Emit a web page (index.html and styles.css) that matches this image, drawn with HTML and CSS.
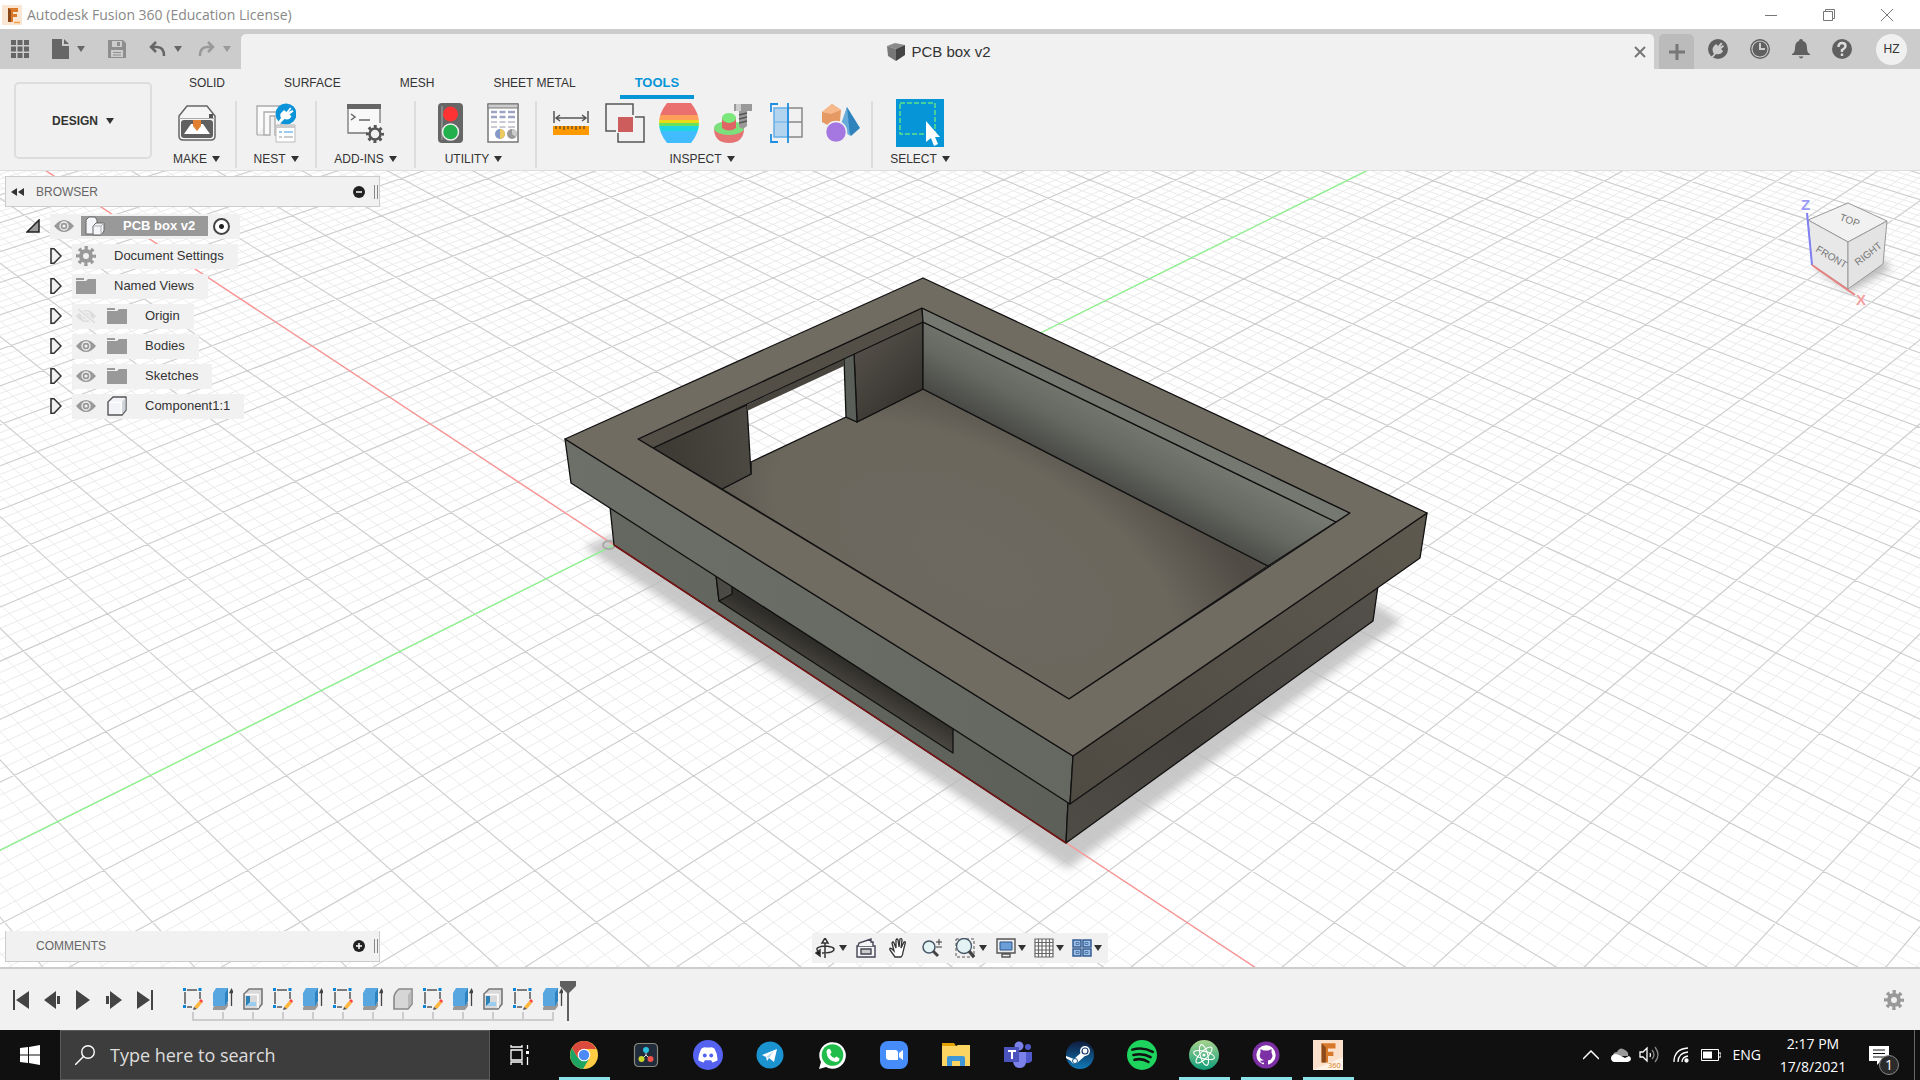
FILE: index.html
```html
<!DOCTYPE html>
<html lang="en">
<head>
<meta charset="utf-8">
<title>Autodesk Fusion 360 (Education License)</title>
<link rel="stylesheet" href="styles.css">
</head>
<body>
<svg class="sprite" aria-hidden="true">
  <symbol id="gear" viewBox="0 0 20 20"><circle cx="10" cy="10" r="5" fill="none" stroke="currentColor" stroke-width="4"/><circle cx="10" cy="10" r="8" fill="none" stroke="currentColor" stroke-width="4" stroke-dasharray="3.14 3.14" stroke-dashoffset="1.57"/></symbol>
  <symbol id="eye" viewBox="0 0 20 14"><path d="M0 7Q5 1 10 1T20 7Q15 13 10 13T0 7Z" fill="#999"/><circle cx="10" cy="7" r="4" fill="#999" stroke="#f1f1f1" stroke-width="1.3"/><circle cx="10" cy="7" r="1.6" fill="#f1f1f1"/></symbol>
  <symbol id="eye-off" viewBox="0 0 20 14"><path d="M0 7Q5 1 10 1T20 7Q15 13 10 13T0 7Z" fill="#dcdcdc"/><circle cx="10" cy="7" r="4" fill="#dcdcdc" stroke="#f1f1f1" stroke-width="1.3"/><path d="M1 0l18 14" stroke="#f1f1f1" stroke-width="4"/><path d="M2 0l17 14" stroke="#dcdcdc" stroke-width="1.5"/></symbol>
  <symbol id="folder" viewBox="0 0 20 16"><path d="M0 0h8v2H0zM0 3h10l2-2h8v15H0Z" fill="#999"/></symbol>
  <symbol id="arrow" viewBox="0 0 12 16"><path d="M1 .8h3L11 8l-7 7.200H1Z" fill="#f1f1f1" stroke="#333" stroke-width="1.6"/></symbol>
  <symbol id="cube" viewBox="0 0 20 20"><path d="M1 6l5-5h13v13l-4 5H1Z" fill="#f1f3f6" stroke="#555" stroke-width="1.4" stroke-linejoin="round"/><path d="M2 6.500h12.500V18" fill="none" stroke="#fff" stroke-width="1.5"/><path d="M15 6l3.500-4v12L15 18Z" fill="#cfd3da"/></symbol>
  <symbol id="sketch" viewBox="0 0 20 22"><path d="M4 2h10M2 4v12M17 4v7M4 19h5" stroke="#555" stroke-width="1.5" fill="none"/><path d="M0 0h3v3H0zM15.500 0h3v3h-3zM0 17h3v3H0z" fill="#0a86d8"/><path d="M11 19l5-6 3 2-5 6z" fill="#ffb83d"/><path d="M16 13l2-2 2 2-1 2z" fill="#f44"/><path d="M11 19l3 2-4 1z" fill="#555"/></symbol>
  <symbol id="extrude" viewBox="0 0 20 22"><path d="M0 20l1-2h10l4-4v4l-3 4H0Z" fill="#999"/><path d="M0 5l3-5h12v13l-3 5H0Z" fill="#57a6e0"/><path d="M12 5l3-5v13l-3 5Z" fill="#2d83bf"/><path d="M18.500 3v15M17 4.500l1.500-3 1.500 3z" stroke="#444" stroke-width="1.300" fill="#444"/></symbol>
  <symbol id="shell" viewBox="0 0 20 22"><path d="M1 6l5-5h13v15l-4 5H1Z" fill="#d9d9d9" stroke="#777" stroke-width="1.6"/><path d="M2 6.500h13V20" fill="none" stroke="#fff" stroke-width="1.5"/><path d="M3 8h4v6h6v4H3Z" fill="#2f80b4"/><path d="M3 18l4-4h6v4z" fill="#9bcdf1"/></symbol>
  <symbol id="fillet" viewBox="0 0 20 22"><path d="M1 10Q1 5 6 1h13v15l-4 5H1Z" fill="#d6d6d6" stroke="#888" stroke-width="1.6"/><path d="M15 7v13l3.500-4V2Z" fill="#b9b9b9"/></symbol>
</svg>

<header class="titlebar">
  <svg class="app-mark" viewBox="0 0 20 20"><rect width="20" height="20" fill="#fbe6d3"/><path d="M6 3h10v4h-5v2h4v3h-4v5H6Z" fill="#d8782a"/><path d="M6 3l3 2v12H6Z" fill="#8c4a1c"/><path d="M12 17.500h6" stroke="#f0a040" stroke-width="1.500"/></svg>
  <h1 class="window-title">Autodesk Fusion 360 (Education License)</h1>
  <button class="win-btn" aria-label="Minimize"><svg width="12" height="12"><path d="M0 6.500h12" stroke="#777"/></svg></button>
  <button class="win-btn" aria-label="Restore"><svg width="12" height="12" fill="none" stroke="#777"><path d="M.5 2.500h9v9h-9zM2.500 2V.5h9v9H10"/></svg></button>
  <button class="win-btn" aria-label="Close"><svg width="12" height="12"><path d="M0 0l12 12M12 0L0 12" stroke="#777"/></svg></button>
</header>

<div class="tabbar">
  <div class="quick">
    <button aria-label="Show data panel"><svg width="18" height="18" fill="#666"><path d="M0 0h5v5H0zM6.500 0h5v5h-5zM13 0h5v5h-5zM0 6.500h5v5H0zM6.500 6.500h5v5h-5zM13 6.500h5v5h-5zM0 13h5v5H0zM6.500 13h5v5h-5zM13 13h5v5h-5z"/></svg></button>
    <button aria-label="File"><svg width="17" height="20" fill="#666"><path d="M0 0h10v7h7v13H0z"/><path d="M12 0l5 5h-5z"/></svg><i class="caret"></i></button>
    <button class="dim" aria-label="Save"><svg width="18" height="18"><path d="M0 0h15l3 3v15H0z" fill="#8e8e8e"/><path d="M4 1h10v6H4zM3 10h12v7H3z" fill="#ccc"/><path d="M9 2h3v4H9zM5 12h8v1H5zM5 14.500h8v1H5z" fill="#8e8e8e"/></svg></button>
    <button aria-label="Undo"><svg width="17" height="16" fill="none" stroke="#666" stroke-width="2.500"><path d="M7 1L2 6l5 5M2 6h6q7 0 7 9"/></svg><i class="caret"></i></button>
    <button class="dim" aria-label="Redo"><svg width="17" height="16" fill="none" stroke="#999" stroke-width="2.500"><path d="M10 1l5 5-5 5M15 6H9q-7 0-7 9"/></svg><i class="caret"></i></button>
  </div>
  <div class="doc-tab">
    <svg width="20" height="18" viewBox="0 0 20 18"><path d="M1 3l8-3 10 2-9 4Z" fill="#8a8a8a"/><path d="M1 3l9 3v12L2 13Z" fill="#777"/><path d="M10 6l9-4v10l-9 6Z" fill="#444"/></svg>
    <span class="doc-name">PCB box v2</span>
    <button class="doc-close" aria-label="Close document"><svg width="12" height="12"><path d="M1 1l10 10M11 1L1 11" stroke="#777" stroke-width="2"/></svg></button>
  </div>
  <div class="account">
    <button class="new-tab" aria-label="New design"><svg width="16" height="16"><path d="M8 0v16M0 8h16" stroke="#777" stroke-width="3"/></svg></button>
    <button aria-label="Extensions"><svg width="20" height="20"><circle cx="10" cy="10" r="10" fill="#606060"/><path d="M3 18l3-3Q3 10 6 7l2-2 2 2 3-3.500 1.500 1L12 8l3-2 1 1.500L13 10l2 2q-2 4-7 3l-3 3.500Z" fill="#ccc"/></svg></button>
    <button aria-label="Job status"><svg width="20" height="20"><circle cx="10" cy="10" r="9.300" fill="#ccc" stroke="#606060" stroke-width="1.400"/><circle cx="10" cy="10" r="7.500" fill="#606060"/><path d="M10 4v6h5" fill="none" stroke="#ccc" stroke-width="2"/></svg></button>
    <button aria-label="Notifications"><svg width="18" height="20" fill="#606060"><path d="M9 0q2 0 2 2 4 1 4 7 0 5 3 6v1H0v-1q3-1 3-6 0-6 4-7 0-2 2-2ZM6.500 17.500h5q-2 4-5 0Z"/></svg></button>
    <button aria-label="Help"><svg width="20" height="20"><circle cx="10" cy="10" r="10" fill="#606060"/><path d="M6.500 8q0-4 3.500-4t3.500 3q0 2-3.500 4v2M10 14.500v2.500" fill="none" stroke="#ddd" stroke-width="2.400"/></svg></button>
    <button class="avatar">HZ</button>
  </div>
</div>

<div class="ribbon">
  <button class="workspace">DESIGN <i class="caret"></i></button>
  <div class="ribbon-main">
    <nav class="tabs">
      <a href="#">SOLID</a><a href="#">SURFACE</a><a href="#">MESH</a><a href="#">SHEET METAL</a><a href="#" class="active">TOOLS</a>
    </nav>
    <div class="groups">
      <section class="group make">
        <div class="tools"><button aria-label="3D Print"><svg width="38" height="36" viewBox="0 0 38 36"><path d="M1 11L9 1h20l8 10v20q0 4-4 4H5q-4 0-4-4Z" fill="#f5f5f5" stroke="#666" stroke-width="1.500"/><path d="M1 13.500h36" stroke="#aaa"/><path d="M3 18q0-3 3-3h26q3 0 3 3v12q0 3-3 3H6q-3 0-3-3Z" fill="#606060"/><path d="M6 29l7-10h3l3 6 3-6h3l7 10Z" fill="#fff"/><path d="M15 15h8v6l-4 5-4-5Z" fill="#e08030"/><path d="M31 9h4v4h-4z" fill="#555"/></svg></button></div>
        <button class="group-label">MAKE <i class="caret"></i></button>
      </section>
      <section class="group nest">
        <div class="tools"><button aria-label="Nest"><svg width="40" height="40" viewBox="0 0 40 40"><path d="M1 32V3h24v29h-6V13h-5v19H8V9h12" fill="#fafafa" stroke="#aaa" stroke-width="1.300"/><path d="M1 32h7" stroke="#aaa"/><circle cx="30" cy="11" r="10.500" fill="#0a93d8"/><path d="M22 19l3-4q-2-4 1-6l2-2 2.500 2L34 4.500l1.500 1L32.500 9l4-2 1 1.500-4 3 2 2q-2 4-7 2.500l-4 4Z" fill="#fff"/><path d="M20 22h19v17H20z" fill="#fff" stroke="#bbb"/><path d="M20 22h19v3H20z" fill="#ccc"/><path d="M23 29h3M28 29h9" stroke="#7bbcec" stroke-width="1.500"/><path d="M23 34h3M28 34h9" stroke="#bbb" stroke-width="1.500"/></svg></button></div>
        <button class="group-label">NEST <i class="caret"></i></button>
      </section>
      <section class="group addins">
        <div class="tools"><button aria-label="Scripts and Add-Ins"><svg width="38" height="40" viewBox="0 0 38 40"><path d="M1 2h32v28H1Z" fill="#f8f8f8"/><path d="M33 20V2H1v28h18" fill="none" stroke="#777" stroke-width="1.300"/><path d="M0 1h34v5H0z" fill="#666"/><path d="M4 11l4 3-4 3M12 17h11" fill="none" stroke="#666" stroke-width="1.500"/><circle cx="28" cy="31" r="5.500" fill="#f1f1f1" stroke="#555" stroke-width="2.500"/><circle cx="28" cy="31" r="7.500" fill="none" stroke="#555" stroke-width="3" stroke-dasharray="2.950 2.950" stroke-dashoffset="1.500"/></svg></button></div>
        <button class="group-label">ADD-INS <i class="caret"></i></button>
      </section>
      <section class="group utility">
        <div class="tools"><button class="slim" aria-label="Compute all"><svg width="25" height="40" viewBox="0 0 25 40"><rect width="25" height="40" rx="4" fill="#666"/><path d="M3 3h2v34H3z" fill="#888"/><circle cx="12.500" cy="11" r="7.500" fill="#f33"/><circle cx="12.500" cy="29" r="8" fill="#22b04c" stroke="#eee" stroke-width="1.500"/></svg></button><button aria-label="Bill of materials"><svg width="32" height="40" viewBox="0 0 32 40"><path d="M1 1h30v38H1z" fill="#fff" stroke="#777" stroke-width="1.500"/><path d="M1 1h30v4H1z" fill="#ccc" stroke="#777"/><path d="M4 9h6M12.500 9h6M21 9h7M4 14h6M12.500 14h6M21 14h7" stroke="#9da3c0" stroke-width="2.500"/><path d="M4 19h6M12.500 19h6M21 19h7M4 24h6M12.500 24h6M21 24h7" stroke="#c9c9d6" stroke-width="2"/><circle cx="13" cy="31" r="5" fill="#8499c8"/><path d="M13 31v-5a5 5 0 0 1 0 10z" fill="#eec95c"/><circle cx="25" cy="31" r="5" fill="#999"/><path d="M25 31v-5a5 5 0 0 1 4 8z" fill="#ccc"/></svg></button></div>
        <button class="group-label">UTILITY <i class="caret"></i></button>
      </section>
      <section class="group inspect">
        <div class="tools">
          <button aria-label="Measure"><svg width="36" height="24" viewBox="0 0 36 24"><path d="M1 0v12M35 0v12M3 7h30M7 4L3 7l4 3M29 4l4 3-4 3" fill="none" stroke="#555" stroke-width="1.500"/><path d="M0 15h36v9H0z" fill="#f90"/><path d="M3 15v3M7 15v3M11 15v4M15 15v3M19 15v3M23 15v4M27 15v3M31 15v3" stroke="#333"/></svg></button>
          <button aria-label="Interference"><svg width="40" height="40" viewBox="0 0 40 40" fill="none" stroke="#555" stroke-width="1.500"><path d="M11 28H1V1h27v11M30 14h9v25H13V30"/><path d="M13 14h15v15H13z" fill="#cd5c5c" stroke="none"/></svg></button>
          <button aria-label="Curvature comb"><svg width="40" height="40" viewBox="0 0 40 40"><clipPath id="barrel"><path d="M8 0h24q8 10 8 20t-8 20H8Q0 30 0 20T8 0Z"/></clipPath><g clip-path="url(#barrel)"><path d="M0 0h40v13H0z" fill="#ea7070"/><path d="M0 12h40v5H0z" fill="#ff9f5c"/><path d="M0 17h40v3H0z" fill="#e8dc18"/><path d="M0 20h40v3H0z" fill="#6be05a"/><path d="M0 23h40v5H0z" fill="#1cd6e0"/><path d="M0 28h40v12H0z" fill="#40bcff"/></g></svg></button>
          <button aria-label="Draft analysis"><svg width="38" height="40" viewBox="0 0 38 40"><path d="M0 25q0 15 15 15t15-15Z" fill="#e57373"/><ellipse cx="15" cy="25" rx="15" ry="7" fill="#7be07b"/><path d="M8 14h14v11q-7 5-14 0Z" fill="#e06464"/><ellipse cx="15" cy="15" rx="7" ry="5" fill="#7be87b"/><path d="M20 1h18v7H20zM25 8h8v15l-4 3-4-2Z" fill="#999"/><path d="M22 1h5v7h-5z" fill="#ccc"/><path d="M25 12l8-2M25 16l8-2M25 20l8-2" stroke="#555" stroke-width="1.500"/></svg></button>
          <button aria-label="Section analysis"><svg width="34" height="40" viewBox="0 0 34 40" fill="none"><path d="M4 5h14v29H4z" fill="#b2d4ef" stroke="#66afe6" stroke-width="1.500"/><path d="M18 5h14v29H18M18 19h14" stroke="#888" stroke-width="1.500"/><path d="M4 19h14" stroke="#66afe6"/><path d="M8 1H1v8M1 31v8h7M18 0v40" stroke="#1e8fe0" stroke-width="1.800"/></svg></button>
          <button aria-label="Component color cycling"><svg width="38" height="38" viewBox="0 0 38 38"><path d="M0 8l10-8 9 6-1 11-9 6-9-5Z" fill="#e59a64"/><path d="M0 8l10-8 9 6-10 4Z" fill="#f7b98c"/><path d="M25 3l13 21-9 8-9-12Z" fill="#2f83bd"/><path d="M25 3l3 29-10-9Z" fill="#66abd9"/><circle cx="14" cy="28" r="10.500" fill="#a478e0" stroke="#f1f1f1" stroke-width="1.500"/></svg></button>
        </div>
        <button class="group-label">INSPECT <i class="caret"></i></button>
      </section>
      <section class="group select">
        <div class="tools"><button class="select-tool" aria-label="Select"><svg width="48" height="48" viewBox="0 0 48 48"><path d="M4 4h35v31H4z" fill="none" stroke="#5fe08a" stroke-width="1.500" stroke-dasharray="5 2"/><path d="M30 22v21l5-4 3 8 4-2-3-7h5Z" fill="#fff"/></svg></button></div>
        <button class="group-label">SELECT <i class="caret"></i></button>
      </section>
    </div>
  </div>
</div>

<main class="viewport">
  <svg class="scene" viewBox="0 171 1920 796" preserveAspectRatio="xMidYMid slice">
    <defs>
      <filter id="soft" x="-10%" y="-10%" width="120%" height="120%"><feGaussianBlur stdDeviation="4"/></filter>
      <linearGradient id="frontFace" x1="0" y1="0" x2="1" y2="0"><stop offset="0" stop-color="#6d6f69"/><stop offset="1" stop-color="#656761"/></linearGradient>
      <linearGradient id="frontBase" x1="0" y1="0" x2="1" y2="0"><stop offset="0" stop-color="#656761"/><stop offset="1" stop-color="#5d5f59"/></linearGradient>
      <linearGradient id="sideFace" x1="0" y1="1" x2="1" y2="0"><stop offset="0" stop-color="#4f4b43"/><stop offset="1" stop-color="#5d594f"/></linearGradient>
      <linearGradient id="sideBase" x1="0" y1="1" x2="1" y2="0"><stop offset="0" stop-color="#4f4c46"/><stop offset=".4" stop-color="#46433e"/><stop offset="1" stop-color="#54504a"/></linearGradient>
      <radialGradient id="floor" gradientUnits="userSpaceOnUse" cx="0" cy="0" r="1" gradientTransform="translate(975 565) rotate(28) scale(340 170)"><stop offset="0" stop-color="#6e6960"/><stop offset=".65" stop-color="#6b675d"/><stop offset="1" stop-color="#504b44"/></radialGradient>
      <linearGradient id="longWall" gradientUnits="userSpaceOnUse" x1="1135" y1="415" x2="1095" y2="490"><stop offset="0" stop-color="#777a73"/><stop offset=".45" stop-color="#666862"/><stop offset="1" stop-color="#42433f"/></linearGradient>
      <linearGradient id="wallA" gradientUnits="userSpaceOnUse" x1="670" y1="450" x2="750" y2="440"><stop offset="0" stop-color="#3e3b35"/><stop offset="1" stop-color="#4c4842"/></linearGradient>
      <linearGradient id="wallB" gradientUnits="userSpaceOnUse" x1="860" y1="350" x2="915" y2="405"><stop offset="0" stop-color="#524e47"/><stop offset="1" stop-color="#35322e"/></linearGradient>
      <linearGradient id="slot" gradientUnits="userSpaceOnUse" x1="845" y1="660" x2="832" y2="682"><stop offset="0" stop-color="#2f2d29"/><stop offset="1" stop-color="#4b4842"/></linearGradient>
    </defs>
    <rect x="-400" y="-200" width="2800" height="1600" fill="#fff"/>
    <path id="grid-minor" class="grid-minor"/>
    <path id="grid-major" class="grid-major"/>
    <path class="shadow" d="M584 547L1068 869 1402 621 1376 604 614 535Z" filter="url(#soft)"/>
    <path id="axis-x" class="axis-x"/>
    <path id="axis-y" class="axis-y"/>
    <ellipse class="origin" cx="609" cy="545" rx="6" ry="4"/>
    <g class="body">
      <path fill="url(#floor)" d="M751 462L846 417 857 422 923 389 1268 566 1069 699 722 489 751 474Z"/>
      <path fill="url(#wallA)" d="M653 448L747 405 751 474 722 489Z"/>
      <path fill="url(#wallB)" d="M854 353L923 322V389L857 422Z"/>
      <path fill="#5a5f59" d="M844 358L854 353 857 422 846 417Z"/>
      <path fill="#48443e" class="no-edge" d="M747 405L844 358V366L747 411Z"/>
      <path fill="#534f47" d="M638 439L922 308 923 322 653 448Z"/>
      <path fill="url(#longWall)" d="M923 322L1336 522 1268 566 923 389Z"/>
      <path fill="#757871" d="M922 308L1350 513 1336 522 923 322Z"/>
      <path fill="url(#frontBase)" d="M610 507L614 545 1066 843 1068 802Z"/>
      <path fill="url(#sideBase)" d="M1068 802L1066 843 1373 621 1378 586Z"/>
      <path fill="url(#slot)" d="M716 575L719 601 953 753V728Z"/>
      <path fill="#4b4a44" d="M716 575L719 601 732 594V585Z"/>
      <path fill="url(#frontFace)" d="M565 439L571 483 1070 804 1073 756Z"/>
      <path fill="url(#sideFace)" d="M1073 756L1070 804 1420 558 1427 513Z"/>
      <path fill="#716c62" fill-rule="evenodd" d="M565 439L923 278 1427 513 1073 756ZM638 439L1069 699 1350 513 922 308Z"/>
    </g>
    <path class="axis-edge" d="M614 545L1066 843"/>
  </svg>

  <div class="overlay">
    <div class="left-dock">
      <section class="panel">
        <svg width="13" height="8"><path d="M6 0v8L0 4ZM13 0v8L7 4Z" fill="#333"/></svg>
        <h2 class="panel-title">BROWSER</h2>
        <button aria-label="Collapse browser"><svg width="12" height="12"><circle cx="6" cy="6" r="6" fill="#222"/><path d="M3 6h6" stroke="#fff" stroke-width="1.500"/></svg></button>
        <i class="grip"></i>
      </section>
      <ul class="tree">
        <li class="root"><svg width="14" height="14"><path d="M1 13L13 1v12Z" fill="#999" stroke="#222" stroke-width="1.500"/></svg><div class="node"><svg width="20" height="14"><use href="#eye"/></svg><span class="picked"><svg width="20" height="20" viewBox="0 0 20 20" fill="#f3f5f8" stroke="#666"><path d="M1 4l3-3h6l2 3v14H1Z"/><path d="M8 10l3-3h8v8l-3 4H8Z"/><path d="M8 10h8v9M16 10l3-3" fill="none" stroke="#aaa"/></svg>PCB box v2</span><input type="radio" checked aria-label="Activate PCB box v2"></div></li>
        <li><svg width="12" height="16"><use href="#arrow"/></svg><div class="node"><svg class="gray" width="20" height="20"><use href="#gear"/></svg><span>Document Settings</span></div></li>
        <li><svg width="12" height="16"><use href="#arrow"/></svg><div class="node"><svg width="20" height="16"><use href="#folder"/></svg><span>Named Views</span></div></li>
        <li><svg width="12" height="16"><use href="#arrow"/></svg><div class="node"><svg width="20" height="14"><use href="#eye-off"/></svg><svg class="kind" width="20" height="16"><use href="#folder"/></svg><span>Origin</span></div></li>
        <li><svg width="12" height="16"><use href="#arrow"/></svg><div class="node"><svg width="20" height="14"><use href="#eye"/></svg><svg class="kind" width="20" height="16"><use href="#folder"/></svg><span>Bodies</span></div></li>
        <li><svg width="12" height="16"><use href="#arrow"/></svg><div class="node"><svg width="20" height="14"><use href="#eye"/></svg><svg class="kind" width="20" height="16"><use href="#folder"/></svg><span>Sketches</span></div></li>
        <li><svg width="12" height="16"><use href="#arrow"/></svg><div class="node"><svg width="20" height="14"><use href="#eye"/></svg><svg class="kind" width="20" height="20"><use href="#cube"/></svg><span>Component1:1</span></div></li>
      </ul>
      <section class="panel comments">
        <h2 class="panel-title">COMMENTS</h2>
        <button aria-label="Expand comments"><svg width="12" height="12"><circle cx="6" cy="6" r="6" fill="#222"/><path d="M3 6h6M6 3v6" stroke="#fff" stroke-width="1.500"/></svg></button>
        <i class="grip"></i>
      </section>
    </div>

    <svg class="viewcube" width="110" height="120" viewBox="1790 190 110 120">
      <defs><filter id="cubeSoft"><feGaussianBlur stdDeviation="4"/></filter></defs>
      <path d="M1815 268L1850 292 1892 268 1870 250Z" fill="#bbb" filter="url(#cubeSoft)"/>
      <path d="M1808 220L1848 203 1887 221 1848 242Z" fill="#f1f1f1" stroke="#999"/>
      <path d="M1808 220L1848 242V289L1812 265Z" fill="#e8e8e8" stroke="#999"/>
      <path d="M1848 242L1887 221 1883 264 1848 289Z" fill="#e3e3e4" stroke="#999"/>
      <path d="M1807 213L1812 265" stroke="#8080f4" stroke-width="2"/>
      <path d="M1812 265L1855 295" stroke="#e88080" stroke-width="2"/>
      <text class="face" transform="translate(1815 251) rotate(31)">FRONT</text>
      <text class="face" transform="translate(1858 266) rotate(-38)">RIGHT</text>
      <text class="face" transform="translate(1839 220) rotate(20)">TOP</text>
      <text class="z" x="1801" y="210">Z</text>
      <text class="x" x="1856" y="305">X</text>
    </svg>

    <div class="navbar" role="toolbar" aria-label="Navigation">
      <button class="drop" aria-label="Orbit"><svg width="20" height="20" fill="none" stroke="#333" stroke-width="1.500"><path d="M10 20V5M5 15Q-3 9 10 8q12 1 8 5-2 2-11 2"/><path d="M10 0l3 5H7Z" fill="#fff"/><path d="M5 12v6l-4-3Z" fill="#111"/></svg><i class="caret"></i></button>
      <button aria-label="Look at"><svg width="20" height="20" fill="#f5f5f5" stroke="#445" stroke-width="1.400"><path d="M1 8h18v11H1z"/><path d="M5 11h10v5H5z" fill="#ccc"/><path d="M2 8l1-3 12-4v3h2v4"/></svg></button>
      <button aria-label="Pan"><svg width="20" height="20"><path d="M6 19L1 12q-1-3 2-1l2 2-2-8q1-2 2 0l2 5V2q1-2 2 0l1 7 1-8q2-1 2 1l-1 8 3-6q2-1 1 2l-2 8q0 3-2 5Z" fill="#fff" stroke="#333" stroke-width="1.300"/></svg></button>
      <button aria-label="Zoom"><svg width="20" height="20"><circle cx="7" cy="9" r="6" fill="#e3f3f3" stroke="#456" stroke-width="1.500"/><path d="M11 13l5 5" stroke="#444" stroke-width="3"/><path d="M14 4h6M17 1v6M14 9h6" stroke="#333"/></svg></button>
      <button class="drop" aria-label="Fit"><svg width="20" height="20"><path d="M1 1h18v18H1z" fill="none" stroke="#555" stroke-dasharray="3 2"/><circle cx="9" cy="8" r="7.500" fill="#e3f3f3" stroke="#456" stroke-width="1.300"/><path d="M14 13l5 6" stroke="#444" stroke-width="3.500"/></svg><i class="caret"></i></button>
      <button class="drop tight" aria-label="Display settings"><svg width="20" height="20"><path d="M1 1h18v14H1zM6 16h8v3H6z" fill="#eee" stroke="#555" stroke-width="1.400"/><path d="M4 4h12v8H4z" fill="#6c9fd8" stroke="#2c5588"/></svg><i class="caret"></i></button>
      <button class="drop tight" aria-label="Grid and snaps"><svg width="20" height="20"><path d="M1 1h18v18H1zM4.500 1v18M8 1v18M12 1v18M15.500 1v18M1 4.500h18M1 8h18M1 12h18M1 15.500h18" fill="#fff" stroke="#666" stroke-width="1.200"/></svg><i class="caret"></i></button>
      <button class="drop tight" aria-label="Viewports"><svg width="20" height="18" fill="#9dc0e8" stroke="#335c92" stroke-width="1.500"><path d="M1 1h8v7H1zM11 1h8v7h-8zM1 10h8v7H1zM11 10h8v7h-8z"/><path d="M4 3.500h3v2H4zM13 3.500h3v2h-3zM4 12.500h3v2H4zM13 12.500h3v2h-3z" stroke-width=".7"/></svg><i class="caret"></i></button>
    </div>
  </div>
</main>

<footer class="timeline">
  <div class="playback">
    <button aria-label="Go to beginning"><svg width="16" height="20" fill="#444"><path d="M0 0h2v20H0zM16 1v18L3 10Z"/></svg></button>
    <button aria-label="Step back"><svg width="16" height="20" fill="#444"><path d="M12 1v18L0 10ZM13 6h3v8h-3z"/></svg></button>
    <button aria-label="Play"><svg width="16" height="20" fill="#444"><path d="M1 0v20l14-10Z"/></svg></button>
    <button aria-label="Step forward"><svg width="16" height="20" fill="#444"><path d="M4 1v18l12-9ZM0 6h3v8H0z"/></svg></button>
    <button aria-label="Go to end"><svg width="16" height="20" fill="#444"><path d="M14 0h2v20h-2zM0 1v18l13-9Z"/></svg></button>
  </div>
  <ol class="history">
    <li><svg><use href="#sketch"/></svg></li><li><svg><use href="#extrude"/></svg></li><li><svg><use href="#shell"/></svg></li><li><svg><use href="#sketch"/></svg></li><li><svg><use href="#extrude"/></svg></li><li><svg><use href="#sketch"/></svg></li><li><svg><use href="#extrude"/></svg></li><li><svg><use href="#fillet"/></svg></li><li><svg><use href="#sketch"/></svg></li><li><svg><use href="#extrude"/></svg></li><li><svg><use href="#shell"/></svg></li><li><svg><use href="#sketch"/></svg></li><li><svg><use href="#extrude"/></svg></li>
  </ol>
  <svg class="marker" width="16" height="40"><path d="M0 0h16v5L9 12v28H7V12L0 5Z" fill="#606060"/></svg>
  <button class="prefs" aria-label="Timeline settings"><svg width="20" height="20"><use href="#gear"/></svg></button>
</footer>

<div class="taskbar">
  <button class="start" aria-label="Start"><svg width="20" height="20" fill="#fff"><path d="M0 3l8-1v7.500H0zM9 2l11-2v9.500H9zM0 10.500h8V18l-8-1zM9 10.500h11V20L9 18z"/></svg></button>
  <label class="search"><svg width="20" height="20" fill="none" stroke="#fff" stroke-width="1.400"><circle cx="13" cy="7" r="6.300"/><path d="M8.500 11.500L0 20"/></svg><input type="text" placeholder="Type here to search" aria-label="Type here to search"></label>
  <button class="taskview" aria-label="Task View"><svg width="20" height="20" fill="none" stroke="#fff" stroke-width="1.300"><path d="M1 5h11v10H1zM1 0v2h11V0M1 20v-3h11v3M17.500 0v4M17.500 12v8"/><path d="M16 6h3v3h-3z" fill="#fff" stroke="none"/></svg></button>
  <nav class="apps">
    <button class="open" aria-label="Chrome"><svg viewBox="0 0 28 28"><circle cx="14" cy="14" r="14" fill="#fc4"/><path d="M2 7a14 14 0 0 0 11 21l6-10-11-1Z" fill="#1da462"/><path d="M2 7l6 10 6-9h12Q22 0 14 0 6 0 2 7Z" fill="#dc4a3d"/><circle cx="14" cy="14" r="6.300" fill="#fff"/><circle cx="14" cy="14" r="5.200" fill="#4c8bf5"/></svg></button>
    <button aria-label="DaVinci Resolve"><svg viewBox="0 0 28 28"><rect x="2.500" y="2.500" width="23" height="23" rx="4" fill="#202b3b" stroke="#8a8a7a" stroke-width="1.200"/><path d="M14 14V9M14 14l-4 4M14 14l4 4" stroke="#ddd"/><circle cx="14" cy="9" r="3" fill="#2bc0de"/><circle cx="9.500" cy="18" r="3" fill="#c8d62b"/><circle cx="18.500" cy="18" r="3" fill="#f0524a"/></svg></button>
    <button aria-label="Discord"><svg class="big" viewBox="0 0 28 28"><circle cx="14" cy="14" r="14" fill="#5562f0"/><path d="M8 8q3-2 4-1h4q1-1 4 1 3 5 3 11-3 2-5 2l-1-2h-6l-1 2q-2 0-5-2 0-6 3-11Z" fill="#fff"/><circle cx="11" cy="14.500" r="1.800" fill="#5562f0"/><circle cx="17" cy="14.500" r="1.800" fill="#5562f0"/></svg></button>
    <button aria-label="Telegram"><svg viewBox="0 0 28 28"><circle cx="14" cy="14" r="13.500" fill="#1c93d1"/><path d="M6 14l15-6-3 13-5-4-2 3-1-4Z" fill="#fff"/><path d="M10 16l8-6-5 7" fill="#b8dcf0"/></svg></button>
    <button aria-label="WhatsApp"><svg viewBox="0 0 28 28"><path d="M1 28l2-7A13.300 13.300 0 1 1 8 26Z" fill="#fff"/><circle cx="14.500" cy="14" r="10.800" fill="#20bd4a"/><path d="M10 8q2-1 3 2l.5 1.500-1.500 2q2 3 4.500 3.500l2-1.500 3 2q0 3-3.500 3.500Q9 20 8.500 11q0-2 1.500-3Z" fill="#fff"/></svg></button>
    <button aria-label="Zoom"><svg viewBox="0 0 28 28"><rect width="28" height="28" rx="8" fill="#478cfb"/><path d="M6 9h9q3 0 3 3v7H9q-3 0-3-3ZM19 12l4-3v10l-4-3Z" fill="#fff"/></svg></button>
    <button aria-label="File Explorer"><svg viewBox="0 0 28 28"><path d="M0 2h12l2 3H0Z" fill="#e2a100"/><path d="M0 5h14l2-1h12v21H0Z" fill="#fcd462"/><path d="M5 25V17q0-2 2-2h14q2 0 2 2v8h-5v-5h-8v5Z" fill="#3f97d8"/></svg></button>
    <button aria-label="Teams"><svg viewBox="0 0 28 28"><circle cx="15" cy="5" r="4.500" fill="#7b83eb"/><circle cx="24" cy="6" r="3" fill="#5059c9"/><path d="M18 11h10v9q-4 4-10 1Z" fill="#5059c9"/><path d="M9 11h13v9q0 7-6 7-7 0-7-8Z" fill="#7b83eb"/><path d="M0 6h15v15H0z" fill="#4b53bc"/><path d="M4 10h8M8 10v8" stroke="#fff" stroke-width="2"/></svg></button>
    <button aria-label="Steam"><svg viewBox="0 0 28 28"><linearGradient id="steam" x2="0" y2="1"><stop stop-color="#101a3c"/><stop offset="1" stop-color="#107ab8"/></linearGradient><circle cx="14" cy="14" r="14" fill="url(#steam)"/><path d="M0 15l8 3 9-8 3 4-9 8q-5 2-6-2l-5-3Z" fill="#fff"/><circle cx="19" cy="10" r="5" fill="#fff"/><circle cx="19" cy="10" r="3" fill="#fff" stroke="#1a3a6a" stroke-width="1.200"/><circle cx="9" cy="20" r="2.500" fill="none" stroke="#1a5a8a"/></svg></button>
    <button aria-label="Spotify"><svg class="big" viewBox="0 0 28 28"><circle cx="14" cy="14" r="14" fill="#1ed45e"/><path d="M5 9q10-3 19 2M6 14q9-2 16 2M7 18.500q7-2 13 2" fill="none" stroke="#111" stroke-width="2.400" stroke-linecap="round"/></svg></button>
    <button class="open" aria-label="Atom"><svg class="big" viewBox="0 0 28 28"><linearGradient id="atom" x2="0" y2="1"><stop stop-color="#a8d490"/><stop offset="1" stop-color="#0d9c78"/></linearGradient><circle cx="14" cy="14" r="14" fill="url(#atom)"/><g fill="none" stroke="#fff" stroke-width="1"><ellipse cx="14" cy="14" rx="10" ry="3.500" transform="rotate(15 14 14)"/><ellipse cx="14" cy="14" rx="10" ry="3.500" transform="rotate(75 14 14)"/><ellipse cx="14" cy="14" rx="10" ry="3.500" transform="rotate(135 14 14)"/></g><circle cx="14" cy="14" r="1.500" fill="#fff"/></svg></button>
    <button class="open" aria-label="GitHub Desktop"><svg viewBox="0 0 28 28"><circle cx="14" cy="14" r="13.500" fill="#7d2fa5"/><circle cx="14" cy="14" r="9.700" fill="#fff"/><path d="M8.500 8l3 1.500h5l3-1.500v3.500q3 7-3.500 8v4.500h-4v-2.500q-3 1-4-2 2 .5 4-.500-6-1-3.500-7.500Z" fill="#7d2fa5"/></svg></button>
    <button class="open" aria-label="Fusion 360"><svg class="big" viewBox="0 0 28 28"><rect width="28" height="28" fill="#fbe0cb"/><path d="M0 28L28 16v12Z" fill="#fff3e8"/><path d="M8 3h13v5h-7v3h5v4h-5v6H8Z" fill="#d8782a"/><path d="M8 3l4 4v14H8Z" fill="#8c4a1c"/><text x="14" y="26" class="badge360">360</text></svg></button>
  </nav>
  <div class="tray">
    <button aria-label="Show hidden icons"><svg width="16" height="10"><path d="M0 9l8-8 8 8" fill="none" stroke="#fff" stroke-width="1.500"/></svg></button>
    <button aria-label="OneDrive"><svg width="20" height="14"><path d="M2 8q0-4 4-4 3-6 8-2 4 2 3 6Z" fill="#999"/><path d="M3 14q-3-1-3-4t4-4q3 0 10 4l4-2q2 1 2 3t-3 3Z" fill="#fff"/></svg></button>
    <button class="volume" aria-label="Volume"><svg width="20" height="18" fill="none" stroke="#fff" stroke-width="1.300"><path d="M1 6h3l4-4v13l-4-4H1ZM11 7q1 2 0 4"/><path d="M13 4q4 5 0 9M16 1q6 8 0 15" stroke="#888"/></svg></button>
    <button aria-label="Network"><svg width="16" height="16" fill="none" stroke="#fff" stroke-width="1.300"><path d="M1 15Q1 2 15 1M5 15q0-9 10-10M9 15q0-5 6-6"/><circle cx="13.500" cy="13.500" r="1.500" fill="#fff"/></svg></button>
    <button aria-label="Battery"><svg width="20" height="12"><path d="M.5.5h17v11H.5zM18 4h2v4h-2" fill="none" stroke="#fff"/><path d="M2 2.500h9v7H2z" fill="#fff"/></svg></button>
    <button class="lang">ENG</button>
    <button class="clock"><time>2:17 PM</time><time>17/8/2021</time></button>
    <button class="notify" aria-label="1 notification"><svg width="20" height="19"><path d="M0 0h20v15h-8l-4 4v-4H0Z" fill="#fff"/><path d="M4 4h12M4 7.500h12M4 11h12" stroke="#111"/></svg><span class="count">1</span></button>
    <i class="desktop-edge"></i>
  </div>
</div>
<script src="grid.js"></script>
</body>
</html>
```
FILE: styles.css
```css
* { box-sizing: border-box; }
body {
  margin: 0;
  height: 100vh;
  display: flex;
  flex-direction: column;
  overflow: hidden;
  font: 12px/16px "Liberation Sans", Arial, sans-serif;
  color: #333;
  background: #f1f1f1;
}
button {
  display: flex;
  align-items: center;
  justify-content: center;
  border: 0;
  padding: 0;
  background: none;
  font: inherit;
  color: inherit;
}
a { color: inherit; text-decoration: none; }
h1, h2, ul, ol { margin: 0; padding: 0; list-style: none; font-size: inherit; font-weight: normal; }
svg { flex: none; display: block; }
.sprite { position: absolute; width: 0; height: 0; }
.caret {
  border: 4px solid transparent;
  border-top: 6px solid #333;
  border-bottom: 0;
}

/* window title bar */
.titlebar { display: flex; align-items: center; height: 29px; flex: none; background: #fff; padding: 0 4px 0 2px; }
.app-mark { width: 20px; height: 20px; }
.window-title {
  flex: 1;
  margin-left: 5px;
  font: 14px/20px "Open Sans", sans-serif;
  color: #888;
}
.win-btn { width: 58px; height: 28px; }

/* document tab bar */
.tabbar { display: flex; height: 40px; flex: none; background: #ccc; align-items: flex-end; }
.quick { display: flex; align-items: center; width: 241px; height: 40px; padding-left: 11px; gap: 23px; }
.quick button { gap: 8px; }
.quick button:nth-child(n+4) { margin-right: -7px; }
.quick .caret { border-top-color: #666; }
.quick .dim .caret { border-top-color: #999; }
.doc-tab {
  flex: 1;
  display: flex;
  align-items: center;
  justify-content: center;
  height: 35px;
  padding-left: 15px;
  gap: 5px;
  background: #f1f1f1;
  border-radius: 5px 5px 0 0;
}
.doc-tab > svg { margin-left: auto; }
.doc-name { font-size: 15px; }
.doc-close { margin-left: auto; width: 28px; height: 30px; }
.account { display: flex; align-items: center; height: 40px; width: 266px; padding-left: 5px; gap: 22px; }
.new-tab { width: 35px; height: 35px; margin: 5px -8px 0 0; background: #bbb; border-radius: 5px 5px 0 0; }
.avatar { width: 31px; height: 31px; border-radius: 50%; background: #f0f0f0; margin-left: 2px; }

/* ribbon */
.ribbon { display: flex; height: 102px; flex: none; border-bottom: 1px solid #ddd; }
.workspace {
  width: 138px;
  height: 77px;
  margin: 13px 0 0 14px;
  gap: 8px;
  border: 2px solid #ddd;
  border-radius: 5px;
  font-weight: bold;
}
.ribbon-main { flex: 1; }
.tabs { display: flex; height: 31px; padding-left: 22px; gap: 29px; }
.tabs a { padding: 6px 15px 0; height: 30px; }
.tabs .active { color: #0696d7; font-weight: bold; font-size: 13px; border-bottom: 4px solid #0696d7; }
.groups { display: flex; height: 68px; }
.group { display: flex; flex-direction: column; align-items: center; height: 67px; border-right: 2px solid #ddd; margin-top: 1px; }
.tools { display: flex; align-items: center; justify-content: center; height: 44px; gap: 14px; }
.tools button { width: 40px; height: 40px; }
.tools .slim { width: 36px; }
.group-label { gap: 5px; height: 18px; margin-top: 5px; }
.make { width: 85px; padding-left: 6px; }
.nest { width: 80px; }
.addins { width: 99px; }
.utility { width: 121px; padding-left: 4px; }
.utility .group-label { margin-right: 8px; }
.inspect { width: 336px; padding-left: 4px; }
.inspect .group-label { margin-right: 8px; }
.select { width: 94px; border-right: 0; }
.tools .select-tool { width: 48px; height: 48px; background: #0696d7; }

/* 3D viewport */
.viewport { position: relative; flex: 1; min-height: 0; border-bottom: 2px solid #ccc; }
.scene { position: absolute; inset: 0; width: 100%; height: 100%; }
.grid-minor { fill: none; stroke: #ebebeb; }
.grid-major { fill: none; stroke: #cfcfcf; stroke-width: 1.2; }
.axis-x { stroke: #ff9494; stroke-width: 1.3; }
.axis-y { stroke: #8cf58c; stroke-width: 1.3; }
.axis-edge { stroke: #7a1414; stroke-width: 1.5; }
.shadow { fill: #bbb; opacity: .8; }
.origin { fill: none; stroke: #aaa; stroke-width: 2; }
.body { stroke: #111; stroke-width: 1.3; stroke-linejoin: round; }
.no-edge { stroke: none; }
.overlay { position: absolute; inset: 0; display: flex; justify-content: center; align-items: flex-end; padding: 5px 0 4px; }
.left-dock { position: absolute; left: 5px; top: 5px; bottom: 5px; width: 375px; display: flex; flex-direction: column; }
.panel {
  display: flex;
  align-items: center;
  height: 31px;
  padding: 0 1px 0 5px;
  background: #f1f1f1;
  border: 1px solid #ccc;
}
.panel-title { flex: 1; margin-left: 12px; color: #666; }
.grip { width: 4px; height: 14px; margin-left: 9px; border: 1px solid #888; border-width: 0 1px; }
.comments { margin-top: auto; border-top: 0; }
.comments .panel-title { margin-left: 25px; }
.tree { padding-top: 4px; font-size: 13px; }
.tree li { display: flex; align-items: center; height: 30px; padding-left: 45px; gap: 10px; }
.tree .root { padding-left: 21px; }
.node { display: flex; align-items: center; height: 25px; padding: 0 14px 0 4px; background: #f1f1f1; }
.node span { margin-left: 18px; }
.node .kind { margin-left: 11px; }
.root .node { padding-right: 10px; }
.node .picked { display: flex; align-items: center; gap: 18px; height: 20px; margin-left: 7px; padding: 0 13px 0 4px; background: #999; color: #fff; font-weight: bold; }
.node input {
  appearance: none;
  width: 17px;
  height: 17px;
  margin: 0 0 0 5px;
  border: 2px solid #444;
  border-radius: 50%;
  background: radial-gradient(circle, #222 2px, #fff 3px);
}
.gray { color: #999; }
.viewcube { position: absolute; right: 20px; top: 19px; }
.face { font-size: 10px; fill: #777; }
.z { font-size: 15px; font-weight: bold; fill: #9a9af5; }
.x { font-size: 15px; font-weight: bold; fill: #f5a0a0; }
.navbar { display: flex; align-items: center; height: 30px; padding: 0 6px 0 3px; gap: 13px; background: #f1f1f1; }
.navbar .drop { gap: 4px; margin-right: -4px; }
.navbar .tight { gap: 2px; margin-right: -5px; }
.navbar .drop:last-child { margin: 0; }

/* design history timeline */
.timeline { position: relative; display: flex; align-items: center; height: 61px; flex: none; padding: 0 16px 0 13px; }
.playback { display: flex; gap: 15px; }
.history { display: flex; margin: 10px 0 0 25px; }
.history li { display: flex; flex-direction: column; align-items: center; width: 30px; }
.history svg { width: 20px; height: 22px; }
.history li::after {
  content: "";
  align-self: stretch;
  height: 9px;
  margin-top: 2px;
  background:
    linear-gradient(#ccc, #ccc) center / 2px 100% no-repeat,
    linear-gradient(#ccc, #ccc) bottom / 100% 2px no-repeat;
}
.history li:first-child::after { margin-left: 14px; background-position: left, bottom; }
.history li:last-child::after { margin-right: 14px; background-position: right, bottom; }
.marker { margin: 2px 0 0 -8px; }
.prefs { margin-left: auto; color: #999; }

/* taskbar */
.taskbar { display: flex; align-items: stretch; height: 50px; flex: none; background: #101010; color: #fff; font-family: "Open Sans", sans-serif; font-size: 14px; }
.start { width: 60px; }
.search { display: flex; align-items: center; gap: 15px; width: 430px; padding-left: 14px; background: #3d3d3d; border: 1px solid #5a5a5a; }
.search input { flex: 1; border: 0; padding: 0; background: none; outline: 0; color: #fff; font: 18px/24px "Open Sans", sans-serif; }
.search input::placeholder { color: #ddd; opacity: 1; }
.taskview { width: 60px; }
.apps { display: flex; margin-left: 3px; }
.apps button { width: 62px; position: relative; }
.apps svg { width: 28px; height: 28px; }
.apps .big { width: 30px; height: 30px; }
.apps .open::after { content: ""; position: absolute; left: 6px; right: 5px; bottom: 0; height: 3px; background: #8be3ea; }
.badge360 { font-size: 7px; fill: #e07a20; }
.tray { display: flex; align-items: center; margin-left: auto; gap: 12px; }
.volume { margin: 0 2px 0 -4px; }
.clock { flex-direction: column; width: 80px; line-height: 23px; }
.notify { position: relative; margin-left: 2px; width: 32px; height: 40px; }
.notify svg { margin-right: 8px; }
.count {
  position: absolute;
  right: 0;
  bottom: 0;
  width: 20px;
  height: 20px;
  border: 1px solid #888;
  border-radius: 50%;
  background: #2b2b2b;
  line-height: 18px;
}
.desktop-edge { width: 6px; height: 50px; margin-left: 3px; border-left: 1px solid #666; }
```
FILE: grid.js
```js
// Ground-plane grid in two-point perspective.
const origin = [614, 545];
const vanishX = [-1529, -867];
const vanishY = [3410, -845];
const stepX = -0.02344;
const stepY = 0.0237;
const near = 0.6;
const far = 1.7;

function project(x, y) {
  const a = stepX * x;
  const b = stepY * y;
  const w = 1 + a + b;
  return [0, 1].map(i => ((origin[i] + a * vanishX[i] + b * vanishY[i]) / w).toFixed(1)).join(' ');
}
function lineAtX(x) {
  const base = 1 + stepX * x;
  return `M${project(x, (near - base) / stepY)}L${project(x, (far - base) / stepY)}`;
}
function lineAtY(y) {
  const base = 1 + stepY * y;
  return `M${project((near - base) / stepX, y)}L${project((far - base) / stepX, y)}`;
}

let minor = '';
let major = '';
for (let i = -150; i <= 175; i++) {
  const lines = lineAtX(i / 5) + lineAtY(i / 5);
  if (i % 5 === 0) major += lines;
  else minor += lines;
}
document.getElementById('grid-minor').setAttribute('d', minor);
document.getElementById('grid-major').setAttribute('d', major);
document.getElementById('axis-x').setAttribute('d', lineAtY(0));
document.getElementById('axis-y').setAttribute('d', lineAtX(0));
```
